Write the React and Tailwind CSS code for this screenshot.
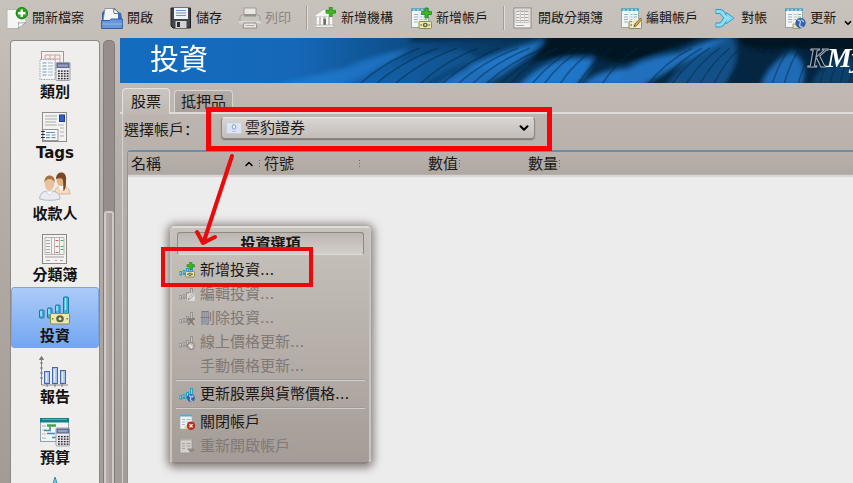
import { ChevronDown, ChevronUp } from 'lucide-react'

/* ---------- shared icon pieces ---------- */

function Plus({ x, y, s = 1 }) {
  return (
    <path
      transform={`translate(${x} ${y}) scale(${s})`}
      d="M3.5 0h3v3.5H10v3H6.5V10h-3V6.5H0v-3h3.5z"
      fill="#3fb81f"
      stroke="#1f8a10"
      strokeWidth="0.8"
    />
  )
}

function Money({ x, y, w = 13, h = 8 }) {
  return (
    <g>
      <rect x={x} y={y} width={w} height={h} rx="1" fill="#e9e7b4" stroke="#8d8a4c" />
      <ellipse cx={x + w / 2} cy={y + h / 2} rx={w / 5} ry={h / 3} fill="#5d6240" />
      <circle cx={x + w / 2} cy={y + h / 2} r={h / 7} fill="#e9e7b4" />
      <path
        d={`M${x + 1.5} ${y + h / 2}h1.4M${x + w - 3} ${y + h / 2}h1.4`}
        stroke="#77773f"
        strokeWidth="1.4"
      />
    </g>
  )
}

function Sheet() {
  return (
    <g>
      <rect x="1.5" y="1.5" width="17" height="19" fill="#f4f6f6" stroke="#9aa5a8" />
      <path d="M1 1.5h18v2.5H1z" fill="#4fa5c8" />
      <path d="M3 3h2M7 3h2M11 3h2M15 3h2" stroke="#d5f0fa" />
      <path
        d="M4 7.5h4M4 10h4M4 12.5h4M4 15h4M10.5 7.5h2M10.5 10h2M10.5 12.5h2"
        stroke="#9cb3c4"
      />
      <path d="M14 7.5h3M14 10h3M14 12.5h3M14 15h3" stroke="#7fc0a0" />
      <path d="M9.3 5.5v12M13.3 5.5v12" stroke="#d2dadd" strokeWidth="0.6" />
    </g>
  )
}

function Calculator({ x, y, w, h }) {
  const dots = []
  for (let r = 0; r < 4; r++) {
    for (let c = 0; c < 4; c++) dots.push([x + 2 + c * 2.9, y + h * 0.44 + r * 2.5])
  }
  return (
    <g>
      <rect x={x} y={y} width={w} height={h} rx="1" fill="#ececf0" stroke="#a0a0aa" />
      <rect x={x + 0.5} y={y + 0.5} width={w - 1} height={h * 0.28} fill="#636d92" />
      <rect x={x + 2} y={y + 2} width={w - 4} height="2.2" fill="#97a3c6" />
      {dots.map(([dx, dy]) => (
        <rect key={`${dx}-${dy}`} x={dx} y={dy} width="1.8" height="1.4" fill="#26262c" />
      ))}
    </g>
  )
}

function Bars({ tone = '#2c9fc4' }) {
  return (
    <g fill={tone}>
      <rect x="0.5" y="9" width="2.5" height="4.5" />
      <rect x="3.8" y="8" width="2.5" height="5" />
      <rect x="7" y="6" width="3" height="7" />
      <rect x="11" y="2" width="3" height="11" />
      <path d="M1 10h1v2H1zM4.5 9h1v2h-1zM8 7h1v3H8zM12 3h1v6h-1z" fill="#fff" opacity=".45" />
    </g>
  )
}

function Globe({ x, y, r }) {
  return (
    <g>
      <circle cx={x} cy={y} r={r} fill="#3862ae" stroke="#244788" strokeWidth="0.6" />
      <path
        d={`M${x - r * 0.6} ${y - r * 0.6}q${r * 0.8} 0 ${r * 0.5} ${r * 0.7}t${r * 0.6} ${r * 0.8}M${x + r * 0.2} ${y - r * 0.7}l${r * 0.5} ${r * 0.5}`}
        stroke="#b7d3f2"
        strokeWidth="1.3"
        fill="none"
      />
    </g>
  )
}

/* ---------- toolbar icons, 22px ---------- */

const toolIcons = {
  create: (
    <>
      <path d="M1 2.5h19v13l-6 6H1z" fill="#f5f6f3" stroke="#b6b8b0" />
      <path d="M12 21.5c1-2 1-4 .2-6 2.200.8 4.800.7 7.800 0z" fill="#fff" stroke="#8e928a" strokeWidth="0.8" />
      <circle cx="15.800" cy="6.200" r="5.700" fill="#27a51d" stroke="#13800d" />
      <path d="M15.800 2.500v7.400M12.100 6.200h7.400" stroke="#fff" strokeWidth="2.400" />
    </>
  ),
  open: (
    <>
      <path d="M1 6l2-2.500h3V14H1z" fill="#2f5fa8" />
      <path d="M2 14l2-12.500h9l5 4.500 2 8z" fill="#f3f5f8" stroke="#7c8796" strokeWidth="0.8" />
      <path d="M13 1.500c-.5 2-.3 3.500.3 5 1.500.3 3 0 4.700-.5z" fill="#fff" stroke="#333b45" strokeWidth="0.800" />
      <path d="M17 5l3 1 1.500 8H17z" fill="#3a6db8" />
      <path d="M.6 13.500h8l1.500-1.500h11.300v9.500H.6z" fill="#6798d6" stroke="#2c579b" strokeWidth="0.900" />
      <path d="M1.200 17h20" stroke="#8db7e8" />
    </>
  ),
  save: (
    <>
      <path d="M1 1h19.500v20H3l-2-2z" fill="#43434a" stroke="#1e1e22" />
      <rect x="4" y="1" width="14" height="11" fill="#eef1f8" />
      <path d="M6 3.500h10M6 6h10M6 8.500h10" stroke="#6f92cb" />
      <rect x="5.500" y="14" width="11" height="7" fill="#d2d2d4" />
      <rect x="7" y="15" width="3" height="5" fill="#2c2c31" />
    </>
  ),
  print: (
    <g opacity="0.85">
      <path d="M5 8V1h12v7" fill="#f0eeec" stroke="#97928e" />
      <path d="M1 9.500l3-2h14l3 2v6H1z" fill="#c9c5c1" stroke="#9c9793" />
      <rect x="5" y="7" width="12" height="2.500" fill="#8e8985" />
      <path d="M0 14h22v2.500H0z" fill="#dedad7" />
      <path d="M5 16h12l1 5H4z" fill="#f3f1ef" stroke="#8c8783" />
      <path d="M6.500 18.500h9" stroke="#aaa5a1" />
    </g>
  ),
  bank: (
    <>
      <path d="M0 8l9-6 9 6v2H0z" fill="#f3f3f1" stroke="#a3a3a0" strokeWidth="0.700" />
      <path d="M2 10h15v8H2z" fill="#b9b7b4" />
      <path d="M3 10v8M7 10v8M12 10v8M16 10v8" stroke="#f7f7f5" strokeWidth="2.400" />
      <path d="M8.500 12h2.500v6H8.500z" fill="#6f6d6a" />
      <path d="M0 18h19v2.500H0z" fill="#eeeeec" stroke="#a3a3a0" strokeWidth="0.700" />
      <Plus x={11} y={0} s={0.95} />
    </>
  ),
  account: (
    <>
      <Sheet />
      <Plus x={11.500} y={1} />
      <Money x={9} y={14.500} w={12.500} h={7} />
    </>
  ),
  ledger: (
    <>
      <rect x="2" y="1" width="17" height="20" fill="#f1f0ee" stroke="#8e8a87" />
      <path d="M4.500 4.500h12M4.500 7.500h12M4.500 10.500h12M4.500 13.500h12" stroke="#a9a5a2" strokeDasharray="3 1.300" />
      <path d="M4 3v12.500h13V3zM8.300 3v12.500M12.600 3v12.500" fill="none" stroke="#b9b1ad" strokeWidth="0.700" />
      <path d="M4 18.500h8" stroke="#aaa6a3" />
    </>
  ),
  edit: (
    <>
      <Sheet />
      <Money x={9} y={14.500} w={12.500} h={7} />
      <path d="M12 12h9v9h-9z" fill="#f4f1e4" opacity="0.8" />
      <path d="M14 20l1-3 5.500-6 1.500 1.500-5.500 6z" fill="#ebac32" stroke="#5b4416" strokeWidth="0.700" />
    </>
  ),
  reconcile: (
    <>
      <g fill="none">
        <path
          d="M.5 4.500h4.500c3.500 0 4 6.600 7.500 6.600M.5 18h4.500c3.500 0 4-6.900 7.500-6.900"
          stroke="#3596bd"
          strokeWidth="4.800"
        />
      </g>
      <path d="M11 5.500l8 5.700-8 5.800z" fill="#7edcf8" stroke="#3596bd" strokeWidth="0.900" />
      <path
        d="M1.200 4.500h3.800c3.500 0 4 6.600 7.500 6.600h1.500M1.200 18h3.800c3.500 0 4-6.900 7.500-6.900h1.500"
        fill="none"
        stroke="#8be0fa"
        strokeWidth="3.200"
      />
    </>
  ),
  refresh: (
    <>
      <Sheet />
      <path d="M9 17h7v4.500H9z" fill="#e5deae" stroke="#8d8a4c" strokeWidth="0.700" />
      <Globe x={16.500} y={16} r={4.800} />
    </>
  ),
}

/* ---------- sidebar icons, 32px ---------- */

const sideIcons = {
  categories: (
    <>
      <rect x="2.500" y="1.500" width="22" height="22" fill="#f5f3f2" stroke="#9e9894" />
      <path d="M6 5h15v14H6zM6 9h15M11 5v14M16 5v14" fill="none" stroke="#cf9d99" />
      <rect x="1" y="9.500" width="15" height="20" fill="#f5f6f7" stroke="#a0a3a8" strokeDasharray="1.500 1" />
      <path d="M3.500 13h4M3.500 16h4M3.500 19h4M3.500 22h4M3.500 25h4" stroke="#6f97c2" />
      <path d="M9 13h5M9 16h5M9 19h5M9 22h5M9 25h5" stroke="#a7b6c5" />
      <Calculator x={17} y={12.500} w={14} h={18} />
    </>
  ),
  tags: (
    <>
      <rect x="3.500" y="1.500" width="24" height="29" fill="#f2f2f0" stroke="#8f8d8b" />
      <path d="M6 5h12M6 8h12M6 11h11M6 14h12" stroke="#a9abad" />
      <rect x="20.500" y="4" width="5" height="6.500" fill="#2c5fc7" stroke="#1b418f" />
      <path d="M19 14h6M21 17h4M21 21h4M21 25h4" stroke="#b1b1af" />
      <rect x="4" y="18.500" width="15" height="11" fill="#fafafa" stroke="#93979c" />
      <path d="M7 21.500h9M7 24h4M12.500 24h4M7 26.700h4M12.500 26.700h4" stroke="#5f94bd" strokeWidth="1.200" />
      <path d="M2 20.500h4M2 23.500h4M2 26.500h4" stroke="#333" />
    </>
  ),
  payees: (
    <>
      <path d="M16 22c0-6 2-8 6.500-8s8 2 8.500 8z" fill="#f4ddc0" stroke="#caa47b" strokeWidth="0.700" />
      <path d="M19.500 14h6l-3 5z" fill="#fff" />
      <ellipse cx="22" cy="8" rx="4.500" ry="6" fill="#e2b381" />
      <path d="M17 7c0-5 3-6.500 5.500-6.500S28 3 27 9c0 4 0 8-2.500 10-.7-4 .5-8-1-12-1.500-1-4-1-6.500 0z" fill="#7a4623" />
      <path d="M.7 27c0-5.500 3-8 9.800-8S21 21.500 21 27c-6 1.800-14 1.800-20.300 0z" fill="#e9ebf1" stroke="#a7abba" strokeWidth="0.800" />
      <path d="M7 19.500l3.500 4 3.500-4" fill="#fff" stroke="#b6bac5" strokeWidth="0.700" />
      <ellipse cx="10.500" cy="12" rx="4.700" ry="6.300" fill="#e9c19a" />
      <path d="M5.500 11c-.5-5 2-7.500 5-7.500s6 2 5 7.500c-1-3-2.500-4-5-4s-4 1-5 4z" fill="#a87342" />
    </>
  ),
  ledger: (
    <>
      <rect x="3.500" y="1.500" width="24" height="29" fill="#f5f3f1" stroke="#8e8885" />
      <path d="M6 4.500h19v17H6zM12.500 4.500v17M15.500 4.500v17M20.500 4.500v17" fill="none" stroke="#aaa39f" strokeWidth="0.800" />
      <path d="M7 7.500h4M7 10.500h4M7 13.500h4M7 16.500h4M7 19.500h4" stroke="#a6a6a6" />
      <path d="M16.500 7.500h3M16.500 13.500h3M16.500 19.500h3" stroke="#cc6262" />
      <path d="M21.500 7.500h3M21.500 13.500h3M21.500 16.500h3" stroke="#4faf4c" />
      <path d="M6 24h19M7 27.500h4M16 27.500h2M21 27.500h3" stroke="#a79f9b" />
    </>
  ),
  investments: (
    <>
      <g fill="#3cb0d6" stroke="#1a789d">
        <rect x="0.500" y="16" width="4.500" height="8" rx="1" />
        <rect x="8.500" y="14" width="4.500" height="10" rx="1" />
        <rect x="16.500" y="11" width="4.500" height="12" rx="1" />
        <rect x="24.500" y="3" width="5" height="18" rx="1" />
      </g>
      <path d="M2 17v5M10 15v5M18 12v5M26.500 4v12" stroke="#9fe4fa" strokeWidth="1.600" />
      <Money x={11.500} y={19.500} w={19} h={10.500} />
    </>
  ),
  reports: (
    <>
      <path d="M2.500 3v27H29" fill="none" stroke="#84888d" />
      <path d="M.5 4.500l2-3 2 3zM1 8h3M1 13h3M1 18h3M1 23h3M8 29v3M16 29v3M23 29v3" fill="#777b80" stroke="#777b80" />
      <g fill="#a9c3ef" stroke="#4368ac">
        <rect x="5.500" y="16.500" width="5" height="12" />
        <rect x="13.500" y="12.500" width="5" height="16" />
        <rect x="21.500" y="15.500" width="5" height="13" />
      </g>
      <path d="M7.500 18v9M15.500 14v13M23.500 17v10" stroke="#e2ecfd" strokeWidth="1.500" />
    </>
  ),
  budget: (
    <>
      <rect x="1.500" y="2.500" width="28" height="23" fill="#f3f5f4" stroke="#8fa2a5" />
      <path d="M1 2h29v4.500H1z" fill="#157f89" />
      <path d="M3 3.500h25" stroke="#49b2b9" />
      <path d="M3 10h4M3 14h4M3 18h4M3 22h4" stroke="#afb4b5" />
      <path d="M8 9.500h9" stroke="#3fa33c" strokeWidth="2.400" />
      <path d="M5 14.500h6v-4M8 17.500h8M13 21.500h5" stroke="#3793ae" strokeWidth="1.600" fill="none" />
      <Calculator x={17} y={12} w={13.500} h={18} />
    </>
  ),
  forecast: <path d="M16 0l3 9 9 4-12 17L4 14l9-4z" fill="#7fcbe0" stroke="#3a8ea8" />,
}

/* ---------- context menu icons, 16px ---------- */

const menuIcons = {
  add: (
    <>
      <Bars />
      <Plus x={8} y={0} s={0.75} />
      <Money x={6.500} y={9.500} w={9} h={5.500} />
    </>
  ),
  edit: (
    <>
      <Bars tone="#9a9490" />
      <path d="M8 8l8-2v9H8z" fill="#dcd8d5" />
      <path d="M9 14l1-2.500 5-5 1 1-5 5.500z" fill="#f4f2f0" stroke="#7f7975" strokeWidth="0.700" />
    </>
  ),
  remove: (
    <>
      <Bars tone="#9a9490" />
      <path d="M8 9h8M9 8l6 7M15 8l-6 7" stroke="#807a76" strokeWidth="1.500" />
    </>
  ),
  online: (
    <>
      <Bars tone="#9a9490" />
      <circle cx="12" cy="12" r="3.500" fill="#c6c0bc" stroke="#857f7b" />
      <path d="M10 11l2 1 1 2" stroke="#fff" fill="none" />
    </>
  ),
  update: (
    <>
      <Bars />
      <Globe x={12} y={12} r={3.500} />
    </>
  ),
  close: (
    <>
      <rect x="1" y="0.500" width="12" height="14.500" fill="#f1f3f3" stroke="#a3abad" strokeWidth="0.700" />
      <path d="M1 .5h12v2H1z" fill="#54a8c8" />
      <path d="M3 5.500h3M3 8h3M3 10.500h3M7.500 5.500h4M7.500 8h4" stroke="#a5b9c7" />
      <path d="M5.500 12h4v3h-4z" fill="#e8d48b" />
      <circle cx="12" cy="11.700" r="3.800" fill="#cf2f22" stroke="#97180f" strokeWidth="0.700" />
      <path d="M10.400 10.100l3.200 3.200M13.600 10.100l-3.200 3.200" stroke="#fff" strokeWidth="1.200" />
    </>
  ),
  reopen: (
    <>
      <rect x="1" y="0.500" width="12" height="14.500" fill="#d5d0cc" stroke="#958f8b" strokeWidth="0.700" />
      <path d="M1 .5h12v2H1z" fill="#b4aea9" />
      <path d="M3 5.500h3M3 8h3M3 10.500h3M7.500 5.500h4M7.500 8h4" stroke="#a7a19d" />
      <path d="M8 10.500h7.500v2L11.500 15z" fill="#928c88" />
    </>
  ),
}

const toolbar = [
  { icon: 'create', label: '開新檔案' },
  { icon: 'open', label: '開啟' },
  { icon: 'save', label: '儲存' },
  { icon: 'print', label: '列印', disabled: true },
  null,
  { icon: 'bank', label: '新增機構' },
  { icon: 'account', label: '新增帳戶' },
  null,
  { icon: 'ledger', label: '開啟分類簿' },
  { icon: 'edit', label: '編輯帳戶' },
  { icon: 'reconcile', label: '對帳' },
  { icon: 'refresh', label: '更新' },
]

const views = [
  { icon: 'categories', label: '類別' },
  { icon: 'tags', label: 'Tags' },
  { icon: 'payees', label: '收款人' },
  { icon: 'ledger', label: '分類簿' },
  { icon: 'investments', label: '投資', active: true },
  { icon: 'reports', label: '報告' },
  { icon: 'budget', label: '預算' },
  { icon: 'forecast' },
]

const menu = [
  { icon: 'add', label: '新增投資...' },
  { icon: 'edit', label: '編輯投資...', disabled: true },
  { icon: 'remove', label: '刪除投資...', disabled: true },
  { icon: 'online', label: '線上價格更新...', disabled: true },
  { label: '手動價格更新...', disabled: true },
  null,
  { icon: 'update', label: '更新股票與貨幣價格...' },
  null,
  { icon: 'close', label: '關閉帳戶' },
  { icon: 'reopen', label: '重新開啟帳戶', disabled: true },
]

function Toolbar() {
  return (
    <header className="flex h-[38px] shrink-0 items-start overflow-hidden pt-1.5 text-[13px] leading-[22px]">
      <div className="flex min-w-0 flex-1 gap-px overflow-hidden">
        {toolbar.map((t, i) =>
          t ? (
            <button
              key={t.label}
              disabled={t.disabled}
              className="flex shrink-0 items-center gap-1 whitespace-nowrap pr-2.5 pl-1.5 text-[#1c1816] disabled:text-[#8b8581]"
            >
              <svg viewBox="0 0 22 22" className="size-[22px]">{toolIcons[t.icon]}</svg>
              <span>{t.label}</span>
            </button>
          ) : (
            <span key={i} className="ml-1 h-6 w-0.5 shrink-0 border-r border-l border-r-[#e0dcd9] border-l-[#a39c97]" />
          ),
        )}
      </div>
      <button aria-label="更多" className="mt-3 shrink-0">
        <ChevronDown className="size-2.5 text-black" strokeWidth={4} />
      </button>
    </header>
  )
}

function Sidebar() {
  return (
    <nav className="flex shrink-0 gap-[3px] pt-0.5 pr-[5px] pl-2.5">
      <ul className="w-[90px] overflow-hidden rounded-t border border-b-0 border-[#8f8884] bg-[#efeeed] pt-0.5">
        {views.map(v => (
          <li key={v.icon}>
            <button
              className={
                v.active
                  ? 'flex h-[61px] w-full flex-col items-center rounded-[3px] border border-[#7ba5e0] bg-linear-to-b from-[#accbf8] to-[#73a6f1] pt-1.5'
                  : 'flex h-[61px] w-full flex-col items-center pt-[7px]'
              }
            >
              <svg viewBox="0 0 32 32" className="size-8">{sideIcons[v.icon]}</svg>
              <span className="text-[15px] leading-5 font-bold text-[#151210]">{v.label}</span>
            </button>
          </li>
        ))}
      </ul>
      <div className="flex w-3 flex-col rounded-t-[5px] border border-b-0 border-[#837b77] bg-[#968e8a]">
        <div className="h-[170px] shrink-0" />
        <div className="flex-1 rounded-t-[3px] border-2 border-b-0 border-[#cfcac7] bg-linear-to-r from-[#b5aeaa] to-[#a29b97]" />
      </div>
    </nav>
  )
}

const beams = [
  { d: 'M150 48L225 30Q262 14 290 11Q272 26 222 48z', o: 0.6 },
  { d: 'M228 48Q290 14 340 12L360 20Q320 34 300 48z', o: 0.28 },
  { d: 'M316 48Q356 20 424 2Q410 22 362 48z', o: 0.7 },
  { d: 'M345 28Q390 8 424 3Q410 18 370 33z', o: 0.45 },
  { d: 'M398 48Q420 24 450 20L474 20Q470 34 456 48z', o: 0.85 },
  { d: 'M461 48Q475 32 506 30Q500 40 484 48z', o: 0.8 },
  { d: 'M486 48Q505 22 560 14Q590 0 612 -2Q575 18 522 48z', o: 0.8 },
  { d: 'M545 48Q570 14 612 -2Q625 18 604 48z', o: 0.45 },
  { d: 'M640 48Q650 22 672 14Q690 24 682 48z', o: 0.75 },
  { d: 'M690 48Q700 22 733 20V48z', o: 0.3 },
]

/* thin dark lines between the beams: foot, slant */
const grooves = [
  [240, 60], [256, 62], [275, 62], [300, 58], [322, 58], [338, 60], [352, 58], [366, 58],
  [380, 56], [390, 48], [412, 44], [424, 40], [440, 36], [458, 34], [482, 36], [528, 44],
  [540, 42], [552, 38], [566, 34], [580, 30], [594, 26], [608, 24], [620, 22], [630, 20],
  [652, 18], [664, 16], [678, 16], [690, 15], [700, 14], [710, 14], [720, 12], [729, 12],
]

function Banner() {
  return (
    <div className="relative h-[45px] shrink-0 overflow-hidden bg-[#04192c]">
      <svg viewBox="0 0 733 45" preserveAspectRatio="none" className="absolute inset-0 size-full" aria-hidden="true">
        <defs>
          <linearGradient id="sky">
            <stop offset="0" stopColor="#146cc0" />
            <stop offset="0.24" stopColor="#1568b7" />
            <stop offset="0.36" stopColor="#0f5290" />
            <stop offset="0.5" stopColor="#0a3c68" />
            <stop offset="0.65" stopColor="#062a48" />
            <stop offset="1" stopColor="#05243e" />
          </linearGradient>
          <filter id="soft" x="-5%" y="-40%" width="110%" height="180%">
            <feGaussianBlur stdDeviation="2.5" />
          </filter>
          <filter id="fine" x="-5%" y="-40%" width="110%" height="180%">
            <feGaussianBlur stdDeviation="0.7" />
          </filter>
        </defs>
        <rect width="733" height="45" fill="url(#sky)" />
        <g filter="url(#soft)">
          <path d="M290 -6h160v6Q370 2 290 4z" fill="#062643" opacity="0.8" />
          <path d="M432 -6H590Q560 8 530 18Q500 32 470 16Q440 18 410 24z" fill="#031421" />
          <path d="M618 -6H740V14Q700 12 664 10Q640 16 618 4z" fill="#031421" />
          {beams.map(b => (
            <path key={b.d} d={b.d} opacity={b.o} fill="#2683dc" />
          ))}
        </g>
        <g filter="url(#fine)" stroke="#062946" strokeWidth="1.5" opacity="0.45" fill="none">
          {grooves.map(([x, s]) => (
            <path key={x} d={`M${x} 46Q${x + s * 0.4} 24 ${x + s} 10`} />
          ))}
        </g>
      </svg>
      <div className="relative flex justify-between">
        <h1 className="pl-[30px] text-[29px] leading-[44px] text-white">投資</h1>
        <div className="flex w-[45px] shrink-0 font-['Liberation_Serif',serif] text-[28px] leading-[40px] font-bold text-white italic">
          <span className="text-[#06192b] [-webkit-text-stroke:1px_#aab4bd]">K</span>
          <span>My</span>
        </div>
      </div>
    </div>
  )
}

function Dots() {
  return (
    <span className="flex flex-col gap-0.5">
      <i className="size-px bg-[#6d6662]" />
      <i className="size-px bg-[#6d6662]" />
      <i className="size-px bg-[#6d6662]" />
    </span>
  )
}

function Holdings() {
  return (
    <div className="flex flex-1 flex-col rounded-tl border-t-2 border-l border-t-[#6f8ca6] border-l-[#8296a8] bg-[#edecec]">
      <table className="w-full table-fixed border-collapse text-[15px] leading-5 text-[#1c1816]">
        <thead>
          <tr className="h-6 border-b-2 border-[#d9d5d2] bg-linear-to-b from-[#b9b1ab] to-[#b0a8a2]">
            <th className="w-[132px] p-0 pl-[3px] font-normal">
              <div className="flex items-center gap-1">
                <span className="flex-1 text-left">名稱</span>
                <ChevronUp className="size-3 text-black" strokeWidth={3} />
                <Dots />
              </div>
            </th>
            <th className="w-[100px] p-0 pl-1 font-normal">
              <div className="flex items-center justify-between">符號<Dots /></div>
            </th>
            <th className="w-[100px] p-0 font-normal">
              <div className="flex items-center justify-end gap-px">數值<Dots /></div>
            </th>
            <th className="w-[100px] p-0 font-normal">
              <div className="flex items-center justify-end gap-px">數量<Dots /></div>
            </th>
            <th className="p-0" />
          </tr>
        </thead>
      </table>
    </div>
  )
}

function ContextMenu() {
  return (
    <div
      role="menu"
      className="absolute top-[226px] left-[170px] w-[201px] rounded-[5px] border-2 border-t-[#dedad7] border-r-[#c9c4c0] border-b-[#8d8682] border-l-[#c9c4c0] bg-linear-to-b from-[#c8c2bd] to-[#a49c97] p-1 text-[15px] shadow-[0_1px_8px_3px_rgba(70,62,56,0.6)]"
    >
      <div className="mx-px mb-[3px] h-[23px] rounded-[3px] border border-[#8f8985] border-b-[#dedad7] bg-linear-to-b from-[#bcb6b1] to-[#d2ceca] text-center leading-[22px] font-bold text-[#171311]">
        投資選項
      </div>
      {menu.map((m, i) =>
        m ? (
          <button
            key={m.label}
            role="menuitem"
            disabled={m.disabled}
            className="flex h-6 w-full items-center gap-[5px] pl-[3px] leading-6 whitespace-nowrap text-[#1c1816] disabled:text-[#807975]"
          >
            <svg viewBox="0 0 16 16" className="size-4 shrink-0">{m.icon && menuIcons[m.icon]}</svg>
            {m.label}
          </button>
        ) : (
          <div key={i} className="my-px h-0.5 border-t border-b border-t-[#a09995] border-b-[#d3cecb]" />
        ),
      )}
    </div>
  )
}

/* red marker boxes and the arrow between them */
function Annotations() {
  return (
    <>
      <div className="pointer-events-none absolute top-[107px] left-[206px] h-11 w-[346px] border-[5px] border-[#f50508]" />
      <div className="pointer-events-none absolute top-[247px] left-[161px] h-10 w-[152px] border-4 border-[#ea0a0c]" />
      <svg viewBox="0 0 50 100" className="pointer-events-none absolute top-[150px] left-[190px] h-[100px] w-[50px]">
        <path
          d="M42 6L14 91M7 82L13 93L25 87"
          fill="none"
          stroke="#ea0a0c"
          strokeWidth="4"
          strokeLinecap="round"
          strokeLinejoin="round"
        />
      </svg>
    </>
  )
}

export default function App() {
  return (
    <div className="relative flex h-screen flex-col overflow-hidden bg-linear-to-b from-[#c8c2bd] via-[#b5ada7] via-40% to-[#a39b96] font-['DejaVu_Sans','Noto_Sans_CJK_TC',sans-serif]">
      <Toolbar />
      <div className="flex min-h-0 flex-1">
        <Sidebar />
        <main className="flex min-w-0 flex-1 flex-col">
          <Banner />
          <div role="tablist" className="flex shrink-0 items-end gap-1 border-b-2 border-[#dedad7] pt-[5px] pl-0.5 text-[15px] text-[#1c1816]">
            <button
              role="tab"
              aria-selected="true"
              className="-mb-0.5 h-[26px] rounded-t border border-b-0 border-[#e4e1de] bg-linear-to-b from-[#cbc5c0] to-[#bfb8b2] px-2 leading-6"
            >
              股票
            </button>
            <button
              role="tab"
              aria-selected="false"
              className="h-[22px] rounded-t border border-b-0 border-[#d9d5d1] bg-linear-to-b from-[#b1aaa5] to-[#a8a09b] px-1.5 leading-[22px]"
            >
              抵押品
            </button>
          </div>
          <section className="ml-0.5 flex min-h-0 flex-1 flex-col border-l border-[#d5d0cc]">
            <div className="flex h-9 shrink-0 items-start pt-[3px] text-[15px] text-[#1c1816]">
              <label htmlFor="account" className="w-[98px] pl-px leading-6 whitespace-nowrap">
                選擇帳戶<span className="font-['Noto_Sans_CJK_SC',sans-serif]">：</span>
              </label>
              <div className="relative w-[314px]">
                <select
                  id="account"
                  className="h-[22px] w-full appearance-none rounded border border-[#8d8682] border-t-[#e9e6e4] bg-linear-to-b from-[#d9d5d2] to-[#c3bdb9] pl-[23px] leading-5 shadow-[0_1px_1px_rgba(0,0,0,0.35)]"
                >
                  <option>雲豹證券</option>
                </select>
                <svg viewBox="0 0 16 12" className="pointer-events-none absolute top-[5px] left-[5px] h-3 w-4">
                  <rect x="0.500" y="0.500" width="15" height="11" rx="1" fill="#dce3f1" stroke="#c3cde0" />
                  <ellipse cx="8" cy="5" rx="1.800" ry="2.300" fill="#f2f5fb" stroke="#7d9bd0" />
                  <path d="M6 9.500h4" stroke="#b4c3de" />
                </svg>
                <ChevronDown className="pointer-events-none absolute top-1 right-1 size-3.5 text-black" strokeWidth={3.5} />
              </div>
            </div>
            <div className="ml-1 flex min-h-0 flex-1 flex-col">
              <Holdings />
            </div>
          </section>
        </main>
      </div>
      <ContextMenu />
      <Annotations />
    </div>
  )
}
